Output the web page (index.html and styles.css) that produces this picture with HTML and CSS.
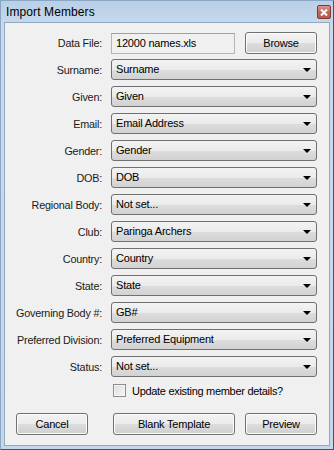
FILE: index.html
```html
<!DOCTYPE html>
<html lang="en">
<head>
    <meta charset="UTF-8">
    <title>Import Members</title>
    <link rel="stylesheet" href="styles.css">
</head>
<body>
    <div class="window">
        <div class="titlebar">
            <span class="title">Import Members</span>
            <span class="close">
                <svg width="8" height="7" viewBox="0 0 8 7"><path d="M1 0.5 L7 6.5 M7 0.5 L1 6.5" stroke="#fff" stroke-width="2"/></svg>
            </span>
        </div>

        <div class="client">
            <div class="fields">
                <label class="data-label">Data File:</label>
                <div class="file-row">
                    <div class="file-input">12000 names.xls</div>
                    <button class="btn browse">Browse</button>
                </div>

                <label>Surname:</label>
                <div class="combo">Surname</div>

                <label>Given:</label>
                <div class="combo">Given</div>

                <label>Email:</label>
                <div class="combo">Email Address</div>

                <label>Gender:</label>
                <div class="combo">Gender</div>

                <label>DOB:</label>
                <div class="combo">DOB</div>

                <label>Regional Body:</label>
                <div class="combo">Not set...</div>

                <label>Club:</label>
                <div class="combo">Paringa Archers</div>

                <label>Country:</label>
                <div class="combo">Country</div>

                <label>State:</label>
                <div class="combo">State</div>

                <label>Governing Body #:</label>
                <div class="combo">GB#</div>

                <label>Preferred Division:</label>
                <div class="combo">Preferred Equipment</div>

                <label>Status:</label>
                <div class="combo">Not set...</div>

                <span></span>
                <div class="check-row">
                    <span class="checkbox"></span>
                    <span>Update existing member details?</span>
                </div>
            </div>

            <div class="actions">
                <button class="btn cancel">Cancel</button>
                <button class="btn template">Blank Template</button>
                <button class="btn preview">Preview</button>
            </div>
        </div>
    </div>
</body>
</html>
```

FILE: styles.css
```css
html, body {
    margin: 0;
    padding: 0;
}
body {
    width: 334px;
    height: 450px;
    font-family: "Liberation Sans", Arial, sans-serif;
    font-size: 11px;
    color: #000;
}
.window {
    box-sizing: border-box;
    width: 334px;
    height: 450px;
    display: flex;
    flex-direction: column;
    border: 1px solid;
    border-color: #8aa6c2 #2e5c78 #2e5c78 #8aa6c2;
    background: linear-gradient(to bottom, #b9d0e8, #c9dbee 30px, #c4d7eb);
    padding: 0 3px 3px 3px;
}
.titlebar {
    height: 21px;
    display: flex;
    align-items: center;
    justify-content: space-between;
    padding: 0 0 0 2px;
}
.title {
    font-size: 12px;
    letter-spacing: 0.1px;
}
.close {
    box-sizing: border-box;
    width: 14px;
    height: 14px;
    margin-right: -1px;
    margin-top: 1px;
    border: 1px solid #7d3b35;
    border-radius: 2px;
    background: linear-gradient(to bottom, #dc9389, #c6675c 50%, #b9574c);
    display: flex;
    align-items: center;
    justify-content: center;
}
.client {
    flex: 1;
    background: #f0f0f0;
    border: 1px solid #93a9bf;
    padding: 9px 11px 0 11px;
    display: flex;
    flex-direction: column;
}
.fields {
    display: grid;
    grid-template-columns: 86px 206px;
    column-gap: 9px;
    row-gap: 6px;
    letter-spacing: -0.2px;
}
.fields label {
    justify-self: end;
    align-self: center;
    white-space: nowrap;
    color: #1a1a1a;
    font-size: 10.8px;
}
.data-label {
    margin-top: 1px;
}
.file-row {
    display: flex;
    gap: 10px;
    margin-bottom: -1px;
    align-items: flex-end;
}
.file-input {
    box-sizing: border-box;
    width: 124px;
    height: 21px;
    border: 1px solid #b5b5b5;
    border-top-color: #a0a0a0;
    background: #f0f0f0;
    padding: 3px 0 0 4px;
}
.combo {
    box-sizing: border-box;
    height: 21px;
    border: 1px solid #707070;
    border-radius: 3px;
    background: linear-gradient(to bottom, #f3f3f3, #ebebeb 50%, #dddddd 51%, #d2d2d2);
    padding: 3px 0 0 4px;
    position: relative;
}
.combo::after {
    content: "";
    position: absolute;
    right: 5px;
    top: 8px;
    border-left: 4px solid transparent;
    border-right: 4px solid transparent;
    border-top: 4px solid #000;
}
.check-row {
    display: flex;
    align-items: center;
    gap: 6px;
    padding-left: 2px;
    margin-top: 1px;
    height: 13px;
    white-space: nowrap;
    letter-spacing: -0.3px;
}
.checkbox {
    box-sizing: border-box;
    width: 13px;
    height: 13px;
    border: 1px solid #8f8f8f;
    background: linear-gradient(135deg, #dcdcdc, #f8f8f8);
    box-shadow: inset 0 0 0 1px #f4f4f4;
}
.btn {
    box-sizing: border-box;
    height: 22px;
    font-family: "Liberation Sans", Arial, sans-serif;
    font-size: 11px;
    letter-spacing: -0.2px;
    color: #000;
    border: 1px solid #707070;
    border-radius: 3px;
    background: linear-gradient(to bottom, #f2f2f2, #ebebeb 50%, #dddddd 51%, #cfcfcf);
    box-shadow: inset 0 0 0 1px #fcfcfc;
    padding: 0;
}
.browse {
    width: 72px;
}
.actions {
    display: flex;
    margin-top: 16px;
}
.cancel {
    width: 72px;
}
.template {
    width: 122px;
    margin-left: 25px;
}
.preview {
    width: 72px;
    margin-left: 10px;
}
```
